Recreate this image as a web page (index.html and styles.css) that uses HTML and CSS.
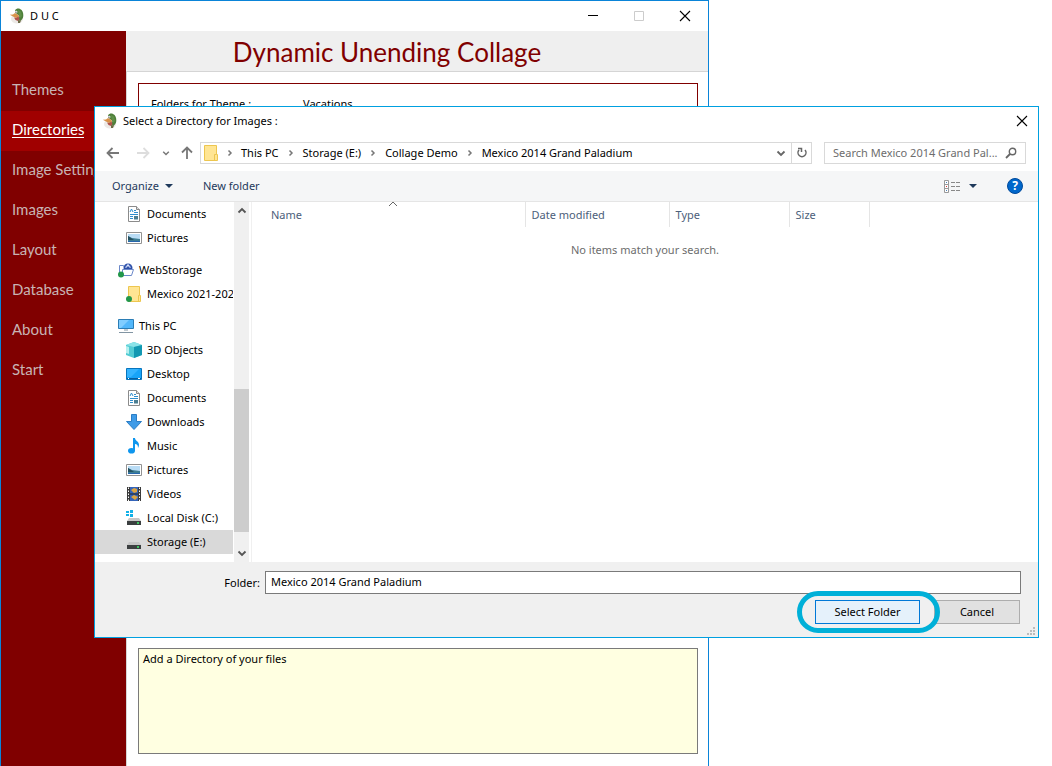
FILE: index.html
```html
<!DOCTYPE html>
<html lang="en">
<head>
    <meta charset="UTF-8">
    <meta name="viewport" content="width=device-width, initial-scale=1.0">
    <title>D U C</title>
    <link rel="stylesheet" href="styles.css">
</head>
<body>
    <!-- Shared icons -->
    <svg class="sprite" aria-hidden="true">
        <symbol id="duck" viewBox="0 0 16 16">
            <ellipse cx="8" cy="11" rx="6" ry="4.500" fill="#ece9e6"/>
            <path d="M6 2.500C7 .5 9.500 0 11 1c2.500 1 3.500 4 3.300 7-.2 2.500-1.500 4-3.300 5L9.500 11l1-3-4-3z" fill="#4e7f3a"/>
            <path d="M9 2l3 1.500 1 4.500-2 2-1.500-4z" fill="#5f9048"/>
            <path d="M.8 6.800L4 6.500l2-1.500 3.500 2L10 9 7 10 4 8.500z" fill="#d8924a"/>
            <path d="M5 9.500L7 10l2.500-1.500 1 2.500-1.500 2L6.500 12z" fill="#b0524a"/>
            <path d="M9 12l3 .5-1 2.500H9z" fill="#6d6a45"/>
            <circle cx="7.200" cy="4" r="1.200" fill="#fff"/>
            <circle cx="7" cy="4.200" r=".6" fill="#222"/>
        </symbol>
        <symbol id="close" viewBox="0 0 12 12">
            <path d="M1 1l10 10M11 1L1 11" fill="none" stroke="#000" stroke-width="1.100"/>
        </symbol>
        <symbol id="chevron" viewBox="0 0 8 8">
            <path d="M2.500 1.500L5 4 2.500 6.500" fill="none" stroke="#777" stroke-width="1.500"/>
        </symbol>
        <symbol id="down" viewBox="0 0 10 10">
            <path d="M1.500 3.500L5 7l3.500-3.500" fill="none" stroke="currentColor" stroke-width="1.800"/>
        </symbol>
        <symbol id="sort-up" viewBox="0 0 10 10">
            <path d="M1 7l4-4 4 4" fill="none" stroke="currentColor"/>
        </symbol>
        <symbol id="triangle" viewBox="0 0 8 4">
            <path d="M0 0h8L4 4z" fill="#1e395b"/>
        </symbol>
        <symbol id="document" viewBox="0 0 16 16">
            <path d="M2.500.5h8l3 3v12h-11z" fill="#fff" stroke="#8b8b8b"/>
            <path d="M10.500.5v3h3" fill="#ddd" stroke="#8b8b8b"/>
            <path d="M4 6l1.500-3L7 6M8 4.500h2M8 6.500h4M4 8.500h8M4 10.500h3M4 12.500h3" fill="none" stroke="#2f8fce"/>
            <path d="M8 10h4v3.500H8z" fill="#4c7e91"/>
        </symbol>
        <symbol id="picture" viewBox="0 0 16 16">
            <path d="M.5 2.500h15v11H.5z" fill="#fff" stroke="#929292"/>
            <path d="M2 4h12v8H2z" fill="#b9dcf5"/>
            <path d="M2 6l4 2 8 1v2H2z" fill="#3d7d93"/>
            <path d="M2 6l3 2 3 2H2z" fill="#245060"/>
            <path d="M2 11h12v1H2z" fill="#2766ad"/>
        </symbol>
        <symbol id="folder" viewBox="0 0 16 16">
            <path d="M1.500.5h12v9h1v6h-13z" fill="#ffe593" stroke="#edc64f"/>
            <path d="M11.500 15V9.500h2" fill="none" stroke="#edc64f"/>
        </symbol>
        <symbol id="folder-sync" viewBox="0 0 16 16">
            <path d="M2.500.5h11v9h1v6h-12z" fill="#ffe593" stroke="#edc64f"/>
            <path d="M12.500 15V9.500h1" fill="none" stroke="#edc64f"/>
            <circle cx="3" cy="13" r="3" fill="#22974a"/>
        </symbol>
        <symbol id="webstorage" viewBox="0 0 16 16">
            <path d="M1.500 13V3.500h4l1 2H14" fill="#fff" stroke="#6b88c9"/>
            <circle cx="10" cy="6" r="4.500" fill="#2c4fa8"/>
            <path d="M8 6V4.500q2-2.500 4 0V6M10 2v3" fill="none" stroke="#dfe8ff"/>
            <path d="M4.500 7.500h11l-2 6h-9z" fill="#fff" stroke="#6b88c9"/>
            <circle cx="3" cy="12.500" r="3" fill="#22974a"/>
        </symbol>
        <symbol id="computer" viewBox="0 0 16 16">
            <path d="M.5 1.500h15v9H.5z" fill="#52b7fa" stroke="#2b7db5"/>
            <path d="M1 2h10L3 10H1z" fill="#80cdff"/>
            <path d="M6 12h4M1 14.500h14" stroke="#8295a3" stroke-width="1.200"/>
        </symbol>
        <symbol id="cube" viewBox="0 0 16 16">
            <path d="M0 3l8-3 8 3v10l-8 3-8-3z" fill="#52cbd3"/>
            <path d="M0 3l8-3 8 3-8 2z" fill="#8be3e8"/>
            <path d="M8 5l8-2v10l-8 3z" fill="#1298b2"/>
            <path d="M0 4l3 1v7l-3-1z" fill="#b4f0ef"/>
        </symbol>
        <symbol id="desktop" viewBox="0 0 16 16">
            <path d="M.5 2.500h15v11H.5z" fill="#18a4f8" stroke="#0875bd"/>
            <path d="M1 3h12L5 11H1z" fill="#35b4ff"/>
            <path d="M1 12.500h14" stroke="#075f9e"/>
            <path d="M2 12.500h1M12 12.500h2" stroke="#fff"/>
        </symbol>
        <symbol id="download" viewBox="0 0 16 16">
            <path d="M5.500.5h5v7h5L8 15.500.5 7.500h5z" fill="#3f9be7" stroke="#2a7dc5"/>
        </symbol>
        <symbol id="music" viewBox="0 0 16 16">
            <ellipse cx="5.500" cy="12.800" rx="3.500" ry="2.800" fill="#0e96ee"/>
            <path d="M7 0h2c0 3 4 3 4 7 0 1-.5 2-1 3 0-3-1-4-3-4v7H7z" fill="#0e96ee"/>
        </symbol>
        <symbol id="video" viewBox="0 0 16 16">
            <path d="M1 1h14v14H1z" fill="#3a3a3a"/>
            <path d="M4 1h8v14H4z" fill="#3464ba"/>
            <path d="M5 4l3-2 3 1v3L8 7zM5 11l3-2 4 2-3 3z" fill="#dba442"/>
            <path d="M4 8h8" stroke="#222"/>
            <path d="M2.500 1.500v14M13.500 1.500v14" stroke="#fff" stroke-dasharray="1.500 1.500"/>
        </symbol>
        <symbol id="drive-body" viewBox="0 0 16 16">
            <path d="M3 8h10l2 3H1z" fill="#c6c6c6"/>
            <path d="M1 11h14v4H1z" fill="#3b3f40"/>
            <path d="M11 13h2" stroke="#3ff36e" stroke-width="1.500"/>
        </symbol>
        <symbol id="drive-win" viewBox="0 0 16 16">
            <path d="M0 1h3v2H0zM4 0h3v3H4zM0 4h3v2H0zM4 4h3v3H4z" fill="#12b1e8"/>
            <use href="#drive-body"/>
        </symbol>
    </svg>

    <div class="window main-window">
        <header class="titlebar">
            <svg class="app-icon"><use href="#duck"/></svg>
            <span class="app-name">D U C</span>
            <button class="caption-button" aria-label="Minimize">
                <svg viewBox="0 0 12 12"><path d="M1 5.500h10" stroke="#000"/></svg>
            </button>
            <button class="caption-button" aria-label="Maximize" disabled>
                <svg viewBox="0 0 12 12"><path d="M1.500 1.500h9v9h-9z" fill="none" stroke="#ccc"/></svg>
            </button>
            <button class="caption-button" aria-label="Close"><svg><use href="#close"/></svg></button>
        </header>
        <div class="app">
            <nav class="sidebar">
                <a href="#themes">Themes</a>
                <a href="#directories" class="active"><span>Directories</span></a>
                <a href="#settings">Image Settings</a>
                <a href="#images">Images</a>
                <a href="#layout">Layout</a>
                <a href="#database">Database</a>
                <a href="#about">About</a>
                <a href="#start">Start</a>
            </nav>
            <main class="page">
                <h1>Dynamic Unending Collage</h1>
                <div class="page-body">
                    <section class="folders">
                        <span class="folders-label">Folders for Theme :</span>
                        <span>Vacations</span>
                    </section>
                    <textarea class="hint" aria-label="Hint" readonly>Add a Directory of your files</textarea>
                </div>
            </main>
        </div>
    </div>

    <div class="window dialog" role="dialog" aria-labelledby="dialogTitle">
        <header class="dialog-title">
            <svg class="app-icon"><use href="#duck"/></svg>
            <span id="dialogTitle">Select a Directory for Images :</span>
            <button class="caption-button" aria-label="Close"><svg><use href="#close"/></svg></button>
        </header>

        <div class="location">
            <button class="nav-button" aria-label="Back">
                <svg viewBox="0 0 14 14"><path d="M13 7H2M6.500 2L1.500 7l5 5" fill="none" stroke="#777" stroke-width="1.800"/></svg>
            </button>
            <button class="nav-button forward" aria-label="Forward">
                <svg viewBox="0 0 14 14"><path d="M1 7h11M7.500 2l5 5-5 5" fill="none" stroke="#ddd" stroke-width="1.800"/></svg>
            </button>
            <button class="nav-button recent" aria-label="Recent locations"><svg><use href="#down"/></svg></button>
            <button class="nav-button up" aria-label="Up">
                <svg viewBox="0 0 14 14"><path d="M7 13V2M2 6.500l5-5 5 5" fill="none" stroke="#777" stroke-width="1.800"/></svg>
            </button>
            <div class="address">
                <svg class="icon"><use href="#folder"/></svg>
                <svg class="chevron"><use href="#chevron"/></svg>
                <a href="#pc">This PC</a>
                <svg class="chevron"><use href="#chevron"/></svg>
                <a href="#storage">Storage (E:)</a>
                <svg class="chevron"><use href="#chevron"/></svg>
                <a href="#demo">Collage Demo</a>
                <svg class="chevron"><use href="#chevron"/></svg>
                <a href="#mexico">Mexico 2014 Grand Paladium</a>
                <button class="address-drop" aria-label="Previous locations"><svg><use href="#down"/></svg></button>
                <button class="refresh" aria-label="Refresh">
                    <svg viewBox="0 0 12 12"><path d="M3 3a4 4 0 1 0 6 0M2 1.500h3.500V5" fill="none" stroke="#666" stroke-width="1.500"/></svg>
                </button>
            </div>
            <div class="search">
                <input type="text" aria-label="Search" placeholder="Search Mexico 2014 Grand Pal...">
                <svg viewBox="0 0 12 12"><circle cx="7.500" cy="4.500" r="3.200" fill="none" stroke="#666" stroke-width="1.400"/><path d="M5 7l-4 4" stroke="#666" stroke-width="1.800"/></svg>
            </div>
        </div>

        <div class="toolbar">
            <button>Organize <svg class="triangle"><use href="#triangle"/></svg></button>
            <button>New folder</button>
            <button class="view" aria-label="Change your view">
                <svg class="view-icon" viewBox="0 0 16 13">
                    <path d="M.5.5h4v12h-4zM.5 4.500h4M.5 8.500h4" fill="#fff" stroke="#999"/>
                    <path d="M2 2.500h1M2 10.500h1" stroke="#4b83bd"/>
                    <path d="M2 6.500h1" stroke="#d33"/>
                    <path d="M7 2.500h4M12 2.500h4M7 6.500h4M12 6.500h4M7 10.500h4M12 10.500h4" stroke="#888"/>
                </svg>
                <svg class="triangle"><use href="#triangle"/></svg>
            </button>
            <button class="help" aria-label="Help">?</button>
        </div>

        <div class="browser">
            <ul class="tree">
                <li><a href="#d1"><svg class="icon"><use href="#document"/></svg>Documents</a></li>
                <li><a href="#p1"><svg class="icon"><use href="#picture"/></svg>Pictures</a></li>
                <li class="root"><a href="#web"><svg class="icon"><use href="#webstorage"/></svg>WebStorage</a></li>
                <li><a href="#m1"><svg class="icon"><use href="#folder-sync"/></svg>Mexico 2021-202</a></li>
                <li class="root"><a href="#pc"><svg class="icon"><use href="#computer"/></svg>This PC</a></li>
                <li><a href="#3d"><svg class="icon"><use href="#cube"/></svg>3D Objects</a></li>
                <li><a href="#desk"><svg class="icon"><use href="#desktop"/></svg>Desktop</a></li>
                <li><a href="#d2"><svg class="icon"><use href="#document"/></svg>Documents</a></li>
                <li><a href="#dl"><svg class="icon"><use href="#download"/></svg>Downloads</a></li>
                <li><a href="#songs"><svg class="icon"><use href="#music"/></svg>Music</a></li>
                <li><a href="#p2"><svg class="icon"><use href="#picture"/></svg>Pictures</a></li>
                <li><a href="#videos"><svg class="icon"><use href="#video"/></svg>Videos</a></li>
                <li><a href="#c"><svg class="icon"><use href="#drive-win"/></svg>Local Disk (C:)</a></li>
                <li class="selected"><a href="#e"><svg class="icon"><use href="#drive-body"/></svg>Storage (E:)</a></li>
            </ul>
            <div class="scrollbar">
                <svg class="scroll-up"><use href="#down"/></svg>
                <div class="thumb"></div>
                <svg><use href="#down"/></svg>
            </div>
            <div class="files">
                <table>
                    <thead>
                        <tr>
                            <th class="col-name">Name<svg class="sort"><use href="#sort-up"/></svg></th>
                            <th class="col-date">Date modified</th>
                            <th class="col-type">Type</th>
                            <th class="col-size">Size</th>
                            <th class="col-rest"></th>
                        </tr>
                    </thead>
                    <tbody>
                        <tr><td colspan="5">No items match your search.</td></tr>
                    </tbody>
                </table>
            </div>
        </div>

        <footer class="dialog-footer">
            <div class="folder-row">
                <label for="folder">Folder:</label>
                <input type="text" id="folder" value="Mexico 2014 Grand Paladium">
            </div>
            <div class="actions">
                <span class="ring"><button class="primary">Select Folder</button></span>
                <button class="cancel">Cancel</button>
            </div>
            <svg class="grip" viewBox="0 0 8 8"><path d="M6 0h2v2H6zM3 3h2v2H3zM6 3h2v2H6zM0 6h2v2H0zM3 6h2v2H3zM6 6h2v2H6z" fill="#bbb"/></svg>
        </footer>
    </div>
</body>
</html>
```
FILE: styles.css
```css
* {
    box-sizing: border-box;
}

body {
    margin: 0;
    height: 100vh;
    position: relative;
    overflow: hidden;
    background-color: #fff;
    color: #000;
    font-family: 'Noto Sans', 'Open Sans', sans-serif;
    font-size: 11px;
    line-height: 16px;
}

button,
input,
textarea {
    font: inherit;
    color: inherit;
}

button {
    display: flex;
    align-items: center;
    justify-content: center;
    padding: 0;
    border: none;
    background: none;
}

a {
    color: inherit;
    text-decoration: none;
}

svg {
    flex: none;
}

.sprite {
    position: absolute;
    width: 0;
    height: 0;
}

.window {
    position: absolute;
    display: flex;
    flex-direction: column;
    background-color: #fff;
    border: 1px solid #0a84d8;
}

/* Main window */
.main-window {
    top: 0;
    bottom: 0;
    left: 0;
    right: 343px;
    border-bottom: none;
}

.titlebar {
    display: flex;
    align-items: center;
    height: 30px;
    padding-left: 8px;
}

.app-icon {
    width: 16px;
    height: 16px;
}

.app-name {
    flex: 1;
    padding-left: 5px;
}

.caption-button {
    width: 46px;
    height: 28px;
}

.caption-button svg {
    width: 12px;
    height: 12px;
}

.app {
    flex: 1;
    display: flex;
    min-height: 0;
}

.sidebar {
    width: 125px;
    padding-top: 40px;
    background-color: #800000;
    color: #c8b4b4;
    font-family: Lato, sans-serif;
    font-size: 15px;
    white-space: nowrap;
    overflow: hidden;
}

.sidebar a {
    display: flex;
    align-items: center;
    height: 40px;
    padding-bottom: 4px;
    padding-left: 11px;
}

.sidebar .active {
    background-color: #a00000;
    color: #fff;
}

.active span {
    border-bottom: 1px solid #fff;
}

.page {
    flex: 1;
    display: flex;
    flex-direction: column;
    min-width: 0;
}

.page h1 {
    margin: 0;
    height: 41px;
    padding-right: 60px;
    border-bottom: 1px solid #d5d5d5;
    background-color: #efefef;
    color: #800000;
    font: 26px/42px Lato, sans-serif;
    text-align: center;
}

.page-body {
    flex: 1;
    display: flex;
    flex-direction: column;
    gap: 12px;
    padding: 11px 10px 12px 11px;
    border-left: 1px solid #d5d5d5;
}

.folders {
    flex: 1;
    display: flex;
    padding: 12px;
    border: 1px solid #800000;
}

.folders-label {
    width: 152px;
}

.hint {
    display: block;
    height: 106px;
    padding: 2px 4px;
    border: 1px solid #7a7a7a;
    outline: none;
    resize: none;
    background-color: #ffffe1;
}

/* Folder picker */
.dialog {
    top: 106px;
    left: 94px;
    right: 13px;
    border-color: #00a0e0;
}

.dialog-title {
    display: flex;
    align-items: center;
    height: 28px;
    padding-left: 7px;
}

.dialog-title span {
    flex: 1;
    padding-left: 5px;
}

.dialog-title .caption-button {
    width: 32px;
}

.location {
    display: flex;
    align-items: center;
    height: 36px;
    padding: 0 12px 0 11px;
}

.nav-button {
    width: 14px;
    height: 22px;
    margin-right: 16px;
}

.nav-button svg {
    width: 14px;
    height: 14px;
}

.nav-button.forward {
    margin-right: 12px;
}

.nav-button.recent {
    width: 8px;
    margin-right: 10px;
    color: #777;
}

.nav-button.recent svg {
    width: 8px;
    height: 8px;
}

.nav-button.up {
    margin-right: 6px;
}

.address-drop svg {
    width: 10px;
    height: 10px;
}

.address,
.search {
    display: flex;
    align-items: center;
    height: 22px;
    border: 1px solid #d9d9d9;
    white-space: nowrap;
}

.address {
    flex: 1;
    padding-left: 2px;
    min-width: 0;
}

.icon {
    width: 16px;
    height: 16px;
}

.chevron {
    width: 8px;
    height: 8px;
    margin: 0 8px;
}

.icon + .chevron {
    margin: 0 7px;
}

.address-drop {
    width: 20px;
    height: 20px;
    margin-left: auto;
    color: #666;
}

.refresh {
    width: 20px;
    height: 20px;
    border-left: 1px solid #d9d9d9;
}

.refresh svg,
.search svg {
    width: 12px;
    height: 12px;
}

.search {
    width: 202px;
    margin-left: 12px;
    padding: 0 8px;
}

.search input {
    flex: 1;
    min-width: 0;
    padding: 0;
    border: none;
    outline: none;
}

.search input::placeholder {
    color: #6d6d6d;
}

.toolbar {
    display: flex;
    align-items: center;
    gap: 30px;
    height: 31px;
    padding: 0 15px 0 17px;
    border-bottom: 1px solid #e5e5e5;
    background-color: #f5f6f7;
    color: #1e395b;
}

.toolbar button {
    gap: 6px;
}

.triangle {
    width: 8px;
    height: 4px;
}

.toolbar .view {
    gap: 9px;
    margin-left: auto;
}

.view-icon {
    width: 16px;
    height: 13px;
}

.toolbar .help {
    width: 16px;
    height: 16px;
    border: 1px solid #004a9c;
    border-radius: 50%;
    background-color: #0067cb;
    color: #fff;
    font-size: 12px;
    font-weight: bold;
}

.browser {
    display: flex;
}

.tree {
    width: 138px;
    margin: 0;
    padding: 0 0 8px;
    list-style: none;
    white-space: nowrap;
    overflow: hidden;
}

.tree a {
    display: flex;
    align-items: center;
    gap: 5px;
    height: 24px;
    padding-left: 31px;
}

.tree .root {
    margin-top: 8px;
}

.tree .root a {
    padding-left: 23px;
}

.tree .selected {
    background-color: #d9d9d9;
}

.scrollbar {
    display: flex;
    flex-direction: column;
    align-items: center;
    width: 16px;
    padding: 4px 0;
    border-left: 1px solid #fff;
    background-color: #f0f0f0;
    color: #555;
}

.scrollbar svg {
    width: 10px;
    height: 10px;
}

.scroll-up {
    transform: rotate(180deg);
}

.thumb {
    width: 100%;
    height: 143px;
    margin-top: auto;
    margin-bottom: 16px;
    background-color: #cdcdcd;
}

.files {
    flex: 1;
    margin-left: 2px;
    border-left: 1px solid #f0f0f0;
}

.files table {
    width: 100%;
    table-layout: fixed;
    border-collapse: collapse;
}

.files th {
    position: relative;
    height: 25px;
    padding: 0 6px;
    border-right: 1px solid #e5e5e5;
    color: #4c607a;
    font-weight: normal;
    text-align: left;
}

.files .col-name {
    width: 273px;
    padding-left: 19px;
}

.files .col-date {
    width: 144px;
}

.files .col-type {
    width: 120px;
}

.files .col-size {
    width: 80px;
}

.files .col-rest {
    border-right: none;
}

.sort {
    position: absolute;
    top: -3px;
    left: 50%;
    width: 10px;
    height: 10px;
    color: #666;
}

.files td {
    height: 46px;
    padding: 0;
    color: #6d6d6d;
    text-align: center;
}

.dialog-footer {
    position: relative;
    padding: 9px 17px 13px;
    background-color: #f0f0f0;
}

.folder-row {
    display: flex;
    align-items: center;
    gap: 5px;
}

.folder-row label {
    width: 148px;
    text-align: right;
}

.folder-row input {
    flex: 1;
    height: 23px;
    padding: 0 5px 2px;
    border: 1px solid #7a7a7a;
    outline: none;
    background-color: #fff;
}

.actions {
    display: flex;
    justify-content: flex-end;
    gap: 14px;
    padding: 6px 1px 0 0;
}

.actions button {
    height: 24px;
    border: 1px solid #adadad;
    background-color: #e1e1e1;
}

.actions .primary {
    width: 105px;
    border-color: #0078d7;
    background-color: #e5f1fb;
}

.actions .cancel {
    width: 86px;
}

.ring {
    position: relative;
    z-index: 1;
}

/* Highlight drawn round the default button */
.ring::after {
    content: '';
    position: absolute;
    inset: -9px -20px -9px -18px;
    border: 5px solid #00b0d8;
    border-radius: 21px;
}

.grip {
    position: absolute;
    right: 3px;
    bottom: 2px;
    width: 8px;
    height: 8px;
}
```
